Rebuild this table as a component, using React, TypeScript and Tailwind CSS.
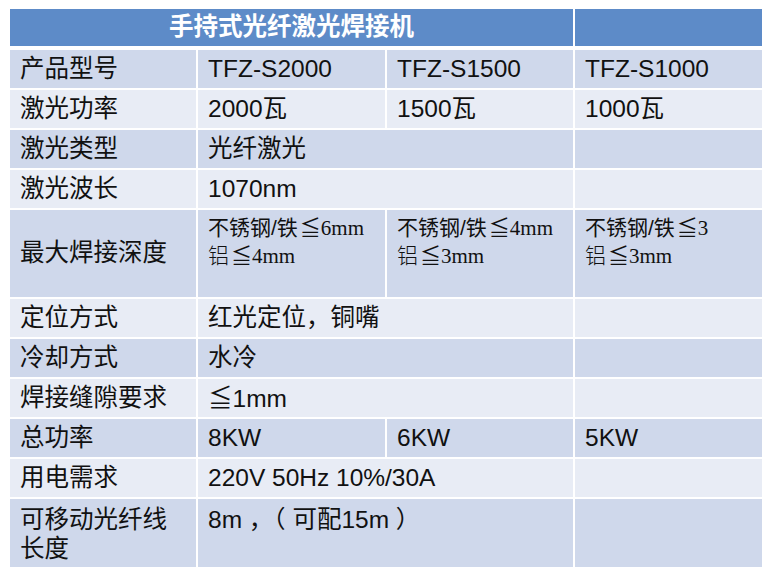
import React from "react";

const DARK = "bg-[#cfd8eb]";
const LIGHT = "bg-[#e8ecf5]";

type Cell = { text?: React.ReactNode; span?: number; valign?: "center" | "top" };
type Row = { label: React.ReactNode; cells: Cell[]; h: string; dark: boolean; labelTop?: boolean };

const sans = "font-['Liberation_Sans','Noto_Sans_CJK_SC',sans-serif]";

function Depth({ a, b }: { a: string; b: string }) {
  return (
    <div className="text-[21px] leading-[26px] -mt-[1px]">
      <div>
        <span>不锈钢/铁</span>
        <span className="font-['Liberation_Serif','DejaVu_Serif','Noto_Sans_CJK_SC',serif] ml-[2px]">≦{a}</span>
      </div>
      <div className="font-['Liberation_Serif','Noto_Sans_CJK_SC',serif]">
        <span className="font-['Noto_Sans_CJK_SC',sans-serif] font-light mr-[2px]">铝</span>≦{b}
      </div>
    </div>
  );
}

const rows: Row[] = [
  { label: "产品型号", h: "h-[38px]", dark: true, cells: [{ text: "TFZ-S2000" }, { text: "TFZ-S1500" }, { text: "TFZ-S1000" }] },
  { label: "激光功率", h: "h-[38px]", dark: false, cells: [{ text: "2000瓦" }, { text: "1500瓦" }, { text: "1000瓦" }] },
  { label: "激光类型", h: "h-[38px]", dark: true, cells: [{ text: "光纤激光", span: 2 }, {}] },
  { label: "激光波长", h: "h-[38px]", dark: false, cells: [{ text: "1070nm", span: 2 }, {}] },
  {
    label: "最大焊接深度",
    h: "h-[87px]",
    dark: true,
    cells: [
      { text: <Depth a="6mm" b="4mm" />, valign: "top" },
      { text: <Depth a="4mm" b="3mm" />, valign: "top" },
      { text: <Depth a="3" b="3mm" />, valign: "top" },
    ],
  },
  { label: "定位方式", h: "h-[38px]", dark: false, cells: [{ text: "红光定位，铜嘴", span: 2 }, {}] },
  { label: "冷却方式", h: "h-[38px]", dark: true, cells: [{ text: "水冷", span: 2 }, {}] },
  {
    label: "焊接缝隙要求",
    h: "h-[38px]",
    dark: false,
    cells: [{ text: <span><span className="font-['Noto_Sans_CJK_SC',sans-serif]">≦</span>1mm</span>, span: 2 }, {}],
  },
  { label: "总功率", h: "h-[38px]", dark: true, cells: [{ text: "8KW" }, { text: "6KW" }, { text: "5KW" }] },
  { label: "用电需求", h: "h-[38px]", dark: false, cells: [{ text: "220V 50Hz 10%/30A", span: 2 }, {}] },
  {
    label: (
      <>
        可移动光纤线
        <br />
        长度
      </>
    ),
    labelTop: true,
    h: "h-[68px]",
    dark: true,
    cells: [{ text: "8m ，（ 可配15m ）", span: 2, valign: "top" }, {}],
  },
];

export default function App() {
  return (
    <div className={`w-[772px] h-[577px] bg-white pt-[9px] pl-[10px] text-[#111] ${sans}`}>
      <div className="flex flex-col w-[752px]">
        <div className="grid grid-cols-[563px_187px] gap-[2px] h-[37px] mb-[4px]">
          <div className="bg-[#5d8bc8] flex items-center justify-center text-white font-bold text-[24.5px] leading-none">
            手持式光纤激光焊接机
          </div>
          <div className="bg-[#5d8bc8]" />
        </div>
        {rows.map((r, i) => {
          const bg = r.dark ? DARK : LIGHT;
          return (
            <div key={i} className={`grid grid-cols-[186px_187px_186px_187px] gap-[2px] mb-[2px] ${r.h}`}>
              <div
                className={`${bg} pl-[10px] text-[24.5px] ${
                  r.labelTop ? "leading-[29px] pt-[6px]" : "flex items-center leading-none"
                }`}
              >
                <div>{r.label}</div>
              </div>
              {r.cells.map((c, j) => (
                <div
                  key={j}
                  className={`${bg} pl-[10px] text-[24.5px] ${c.span === 2 ? "col-span-2" : ""} ${
                    c.valign === "top" ? "leading-[29px] pt-[6px]" : "flex items-center leading-none"
                  }`}
                >
                  {c.text !== undefined ? <div className="whitespace-nowrap">{c.text}</div> : null}
                </div>
              ))}
            </div>
          );
        })}
      </div>
    </div>
  );
}
